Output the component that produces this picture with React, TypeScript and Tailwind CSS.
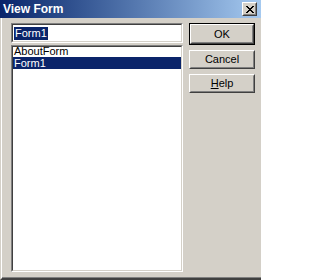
import type { ReactNode } from 'react'

const FONT = { fontFamily: '"Liberation Sans", Arial, sans-serif' }

/** Win2000-style sunken frame (edit boxes, list boxes). */
function Sunken({ className = '', children }: { className?: string; children: ReactNode }) {
  return (
    <div className={`border border-t-[#808080] border-l-[#808080] border-b-white border-r-white ${className}`}>
      <div className="flex h-full flex-col overflow-hidden border border-t-[#404040] border-l-[#404040] border-b-[#d4d0c8] border-r-[#d4d0c8] bg-white">
        {children}
      </div>
    </div>
  )
}

/** Raised push button. */
function PushButton({ children, isDefault = false, h }: { children: ReactNode; isDefault?: boolean; h: string }) {
  const face = (
    <div className="h-full border border-t-white border-l-white border-b-[#404040] border-r-[#404040]">
      <div className="flex h-full items-center justify-center border border-t-[#d4d0c8] border-l-[#d4d0c8] border-b-[#808080] border-r-[#808080] text-[11px] leading-none text-black">
        {children}
      </div>
    </div>
  )
  return <div className={`${h} ${isDefault ? 'border border-black' : ''}`}>{face}</div>
}

export default function App() {
  return (
    <div className="flex h-[280px] w-[261px] flex-col overflow-hidden bg-[#d4d0c8] select-none" style={FONT}>
      {/* title bar */}
      <div className="flex h-[18px] shrink-0 items-center bg-linear-to-r from-[#0a246a] to-[#a6caf0] pl-[3px] pr-[4px]">
        <span className="flex-1 text-[12px] font-bold leading-none text-white">View Form</span>
        <div className="h-[14px] w-[15px] border border-t-white border-l-white border-b-[#404040] border-r-[#404040] bg-[#d4d0c8]">
          <div className="flex h-full items-center justify-center border border-t-[#d4d0c8] border-l-[#d4d0c8] border-b-[#808080] border-r-[#808080]">
            <svg width="8" height="7" viewBox="0 0 8 7" shapeRendering="crispEdges">
              <path d="M0 0h2v1h-2zM6 0h2v1h-2zM1 1h2v1h-2zM5 1h2v1h-2zM2 2h4v1h-4zM3 3h2v1h-2zM2 4h4v1h-4zM1 5h2v1h-2zM5 5h2v1h-2zM0 6h2v1h-2zM6 6h2v1h-2z" fill="#000" />
            </svg>
          </div>
        </div>
      </div>

      {/* body */}
      <div className="flex min-h-0 flex-1 border-l border-b border-l-[#d4d0c8] border-b-[#404040]">
        <div className="flex min-h-0 flex-1 border-l border-b border-l-white border-b-[#404040]">
          <div className="flex min-h-0 flex-1 border-b border-b-[#808080] pl-[9px] pt-[5px] pb-[5px]">
            {/* left column */}
            <div className="flex w-[172px] flex-col gap-[2px]">
              <Sunken className="h-[20px] shrink-0">
                <div className="flex items-start pl-[1px] pt-[2px]">
                  <span className="block bg-[#0a246a] px-[1px] text-[11px] leading-[13px] text-white">Form1</span>
                </div>
              </Sunken>
              <Sunken className="min-h-0 flex-1">
                <div className="-mt-[2px] h-[12px] shrink-0 pl-[1px] text-[11px] leading-[12px] text-black">AboutForm</div>
                <div className="h-[12px] shrink-0 bg-[#0a246a] pl-[1px] text-[11px] leading-[12px] text-white">Form1</div>
              </Sunken>
            </div>

            {/* right column */}
            <div className="ml-[6px] flex w-[66px] flex-col gap-[5px]">
              <PushButton isDefault h="h-[22px]">OK</PushButton>
              <PushButton h="h-[19px]">Cancel</PushButton>
              <PushButton h="h-[19px]">
                <span>
                  <span className="underline underline-offset-1">H</span>elp
                </span>
              </PushButton>
            </div>
          </div>
        </div>
      </div>
    </div>
  )
}
